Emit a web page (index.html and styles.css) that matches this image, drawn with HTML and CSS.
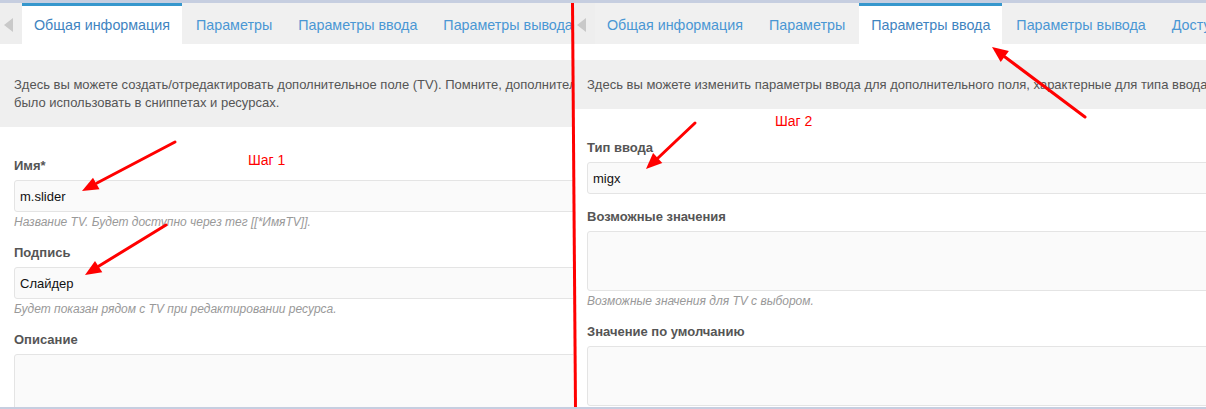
FILE: index.html
```html
<!DOCTYPE html>
<html lang="ru">
<head>
<meta charset="utf-8">
<title>TV</title>
<link rel="stylesheet" href="styles.css">
</head>
<body>
<div class="screen">
  <div class="panel panel-left">
    <div class="tabs">
      <div class="scroller"><span class="tri"></span></div>
      <div class="tab active">Общая информация</div>
      <div class="tab">Параметры</div>
      <div class="tab">Параметры ввода</div>
      <div class="tab">Параметры вывода</div>
      <div class="tab">Доступ к ресурсам</div>
    </div>
    <div class="intro">Здесь вы можете создать/отредактировать дополнительное поле (TV). Помните, дополнительные поля необходимо добавить в шаблоны, чтобы их можно<br>было использовать в сниппетах и ресурсах.</div>
    <div class="form">
      <div class="field">
        <div class="label">Имя*</div>
        <div class="input">m.slider</div>
        <div class="help">Название TV. Будет доступно через тег [[*ИмяTV]].</div>
      </div>
      <div class="field">
        <div class="label">Подпись</div>
        <div class="input">Слайдер</div>
        <div class="help">Будет показан рядом с TV при редактировании ресурса.</div>
      </div>
      <div class="field">
        <div class="label">Описание</div>
        <div class="input textarea"></div>
      </div>
    </div>
  </div>
  <div class="panel panel-right">
    <div class="tabs">
      <div class="scroller"><span class="tri"></span></div>
      <div class="tab">Общая информация</div>
      <div class="tab">Параметры</div>
      <div class="tab active">Параметры ввода</div>
      <div class="tab">Параметры вывода</div>
      <div class="tab">Доступ к ресурсам</div>
    </div>
    <div class="intro">Здесь вы можете изменить параметры ввода для дополнительного поля, характерные для типа ввода, который вы выберете.</div>
    <div class="form">
      <div class="field">
        <div class="label">Тип ввода</div>
        <div class="input">migx</div>
      </div>
      <div class="field">
        <div class="label">Возможные значения</div>
        <div class="input textarea"></div>
        <div class="help">Возможные значения для TV с выбором.</div>
      </div>
      <div class="field">
        <div class="label">Значение по умолчанию</div>
        <div class="input textarea"></div>
      </div>
    </div>
  </div>
  <svg class="annot" width="1206" height="409" viewBox="0 0 1206 409">
    <line x1="572.5" y1="3" x2="575.5" y2="409" stroke="#ff0000" stroke-width="3"/>
    <g stroke="#ff0000" stroke-width="3" stroke-linecap="round">
      <line x1="175" y1="142" x2="97" y2="183"/>
      <line x1="166" y1="225" x2="99" y2="266"/>
      <line x1="695" y1="123" x2="658" y2="158"/>
      <line x1="1085" y1="117" x2="1005" y2="57"/>
    </g>
    <g fill="#ff0000">
      <polygon points="82,191 99.5,189.3 93,177.7"/>
      <polygon points="85,275 102.3,272.2 95,261"/>
      <polygon points="646,169 662.3,162.9 653.1,153.1"/>
      <polygon points="992,47 1000.7,62.1 1008.9,51.1"/>
    </g>
    <text class="step" x="248" y="165">Шаг 1</text>
    <text class="step" x="775" y="126">Шаг 2</text>
  </svg>
</div>
</body>
</html>
```
FILE: styles.css
```css
html, body {
  margin: 0;
  padding: 0;
  background: #ffffff;
}

.screen {
  position: relative;
  width: 1206px;
  height: 409px;
  box-sizing: border-box;
  border-top: 3px solid #c6cee0;
  border-bottom: 2px solid #c6cee0;
  display: flex;
  overflow: hidden;
  font-family: "Liberation Sans", Arial, sans-serif;
  background: #ffffff;
}

.panel {
  overflow: hidden;
  height: 100%;
}

.panel-left {
  width: 573px;
  flex-shrink: 0;
}

.panel-right {
  flex: 1;
}

.tabs {
  display: flex;
  height: 41px;
  background: #f0f0f0;
  width: 1000px;
}

.scroller {
  width: 22px;
  flex-shrink: 0;
  display: flex;
  align-items: center;
  padding-left: 4px;
  box-sizing: border-box;
  background: #eeeeee;
}

.tri {
  width: 0;
  height: 0;
  border-top: 7px solid transparent;
  border-bottom: 7px solid transparent;
  border-right: 9px solid #c9c9c9;
  margin-top: 3px;
}

.tab {
  flex-shrink: 0;
  box-sizing: border-box;
  padding: 0 12px;
  margin-right: 2px;
  border-top: 3px solid transparent;
  display: flex;
  align-items: center;
  font-size: 14.3px;
  color: #4a97d4;
  white-space: nowrap;
}

.tab.active {
  background: #ffffff;
  border-top-color: #3697cd;
  color: #3f84bf;
}

.intro {
  margin-top: 16px;
  background: #efefef;
  padding: 16px 14px 15px;
  font-size: 13px;
  line-height: 18px;
  color: #555555;
  white-space: nowrap;
  width: 1200px;
}

.form {
  padding: 30px 14px 0;
  width: 1000px;
}

.field {
  margin-bottom: 14px;
}

.label {
  font-size: 13px;
  font-weight: bold;
  line-height: 18px;
  color: #555555;
  margin-bottom: 5px;
}

.input {
  height: 32px;
  box-sizing: border-box;
  border: 1px solid #e4e4e4;
  border-radius: 3px;
  background: #fafafa;
  font-size: 13px;
  color: #111111;
  padding: 0 5px;
  display: flex;
  align-items: center;
}

.input.textarea {
  height: 60px;
}

.help {
  margin-top: 3px;
  font-size: 12px;
  line-height: 15px;
  font-style: italic;
  color: #999999;
}

.annot {
  position: absolute;
  left: 0;
  top: -3px;
  pointer-events: none;
}

.step {
  font-family: "Liberation Sans", Arial, sans-serif;
  font-size: 14px;
  fill: #ff0000;
}
```
